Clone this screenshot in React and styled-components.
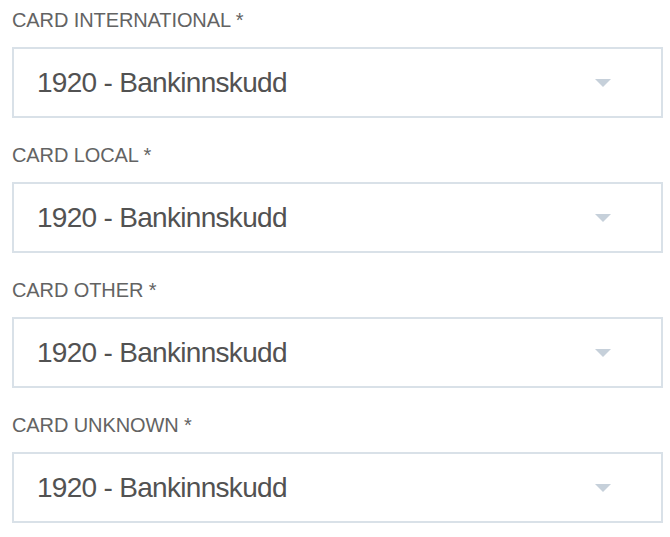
import React from "react";
import styled, { createGlobalStyle } from "styled-components";

const Global = createGlobalStyle`
  html, body { margin: 0; padding: 0; background: #ffffff; }
  body { font-family: "Liberation Sans", Arial, sans-serif; }
`;

const Form = styled.div`
  display: flex;
  flex-direction: column;
  gap: 25px;
  padding: 8px 7px 0 12px;
`;

const Field = styled.div`
  display: flex;
  flex-direction: column;
  gap: 15px;
`;

const Label = styled.label`
  font-family: "Liberation Sans", Arial, sans-serif;
  font-size: 20px;
  line-height: 24px;
  letter-spacing: -0.1px;
  color: #636363;
  text-transform: uppercase;
`;

const SelectBox = styled.div`
  box-sizing: border-box;
  height: 71px;
  border: 2px solid #d9e1e8;
  display: flex;
  align-items: center;
  justify-content: space-between;
  padding: 0 50px 0 23px;
  background: #ffffff;
`;

const Value = styled.span`
  font-family: "Liberation Sans", Arial, sans-serif;
  font-size: 28px;
  letter-spacing: -0.7px;
  color: #525252;
`;

const Caret = styled.svg`
  width: 16px;
  height: 8px;
  display: block;
`;

const fields = ["CARD INTERNATIONAL", "CARD LOCAL", "CARD OTHER", "CARD UNKNOWN"];

export default function App() {
  return (
    <>
      <Global />
      <Form>
        {fields.map((f) => (
          <Field key={f}>
            <Label>{f} *</Label>
            <SelectBox>
              <Value>1920 - Bankinnskudd</Value>
              <Caret viewBox="0 0 16 8">
                <path d="M0 0 H16 L8 8 Z" fill="#c6d0da" />
              </Caret>
            </SelectBox>
          </Field>
        ))}
      </Form>
    </>
  );
}
